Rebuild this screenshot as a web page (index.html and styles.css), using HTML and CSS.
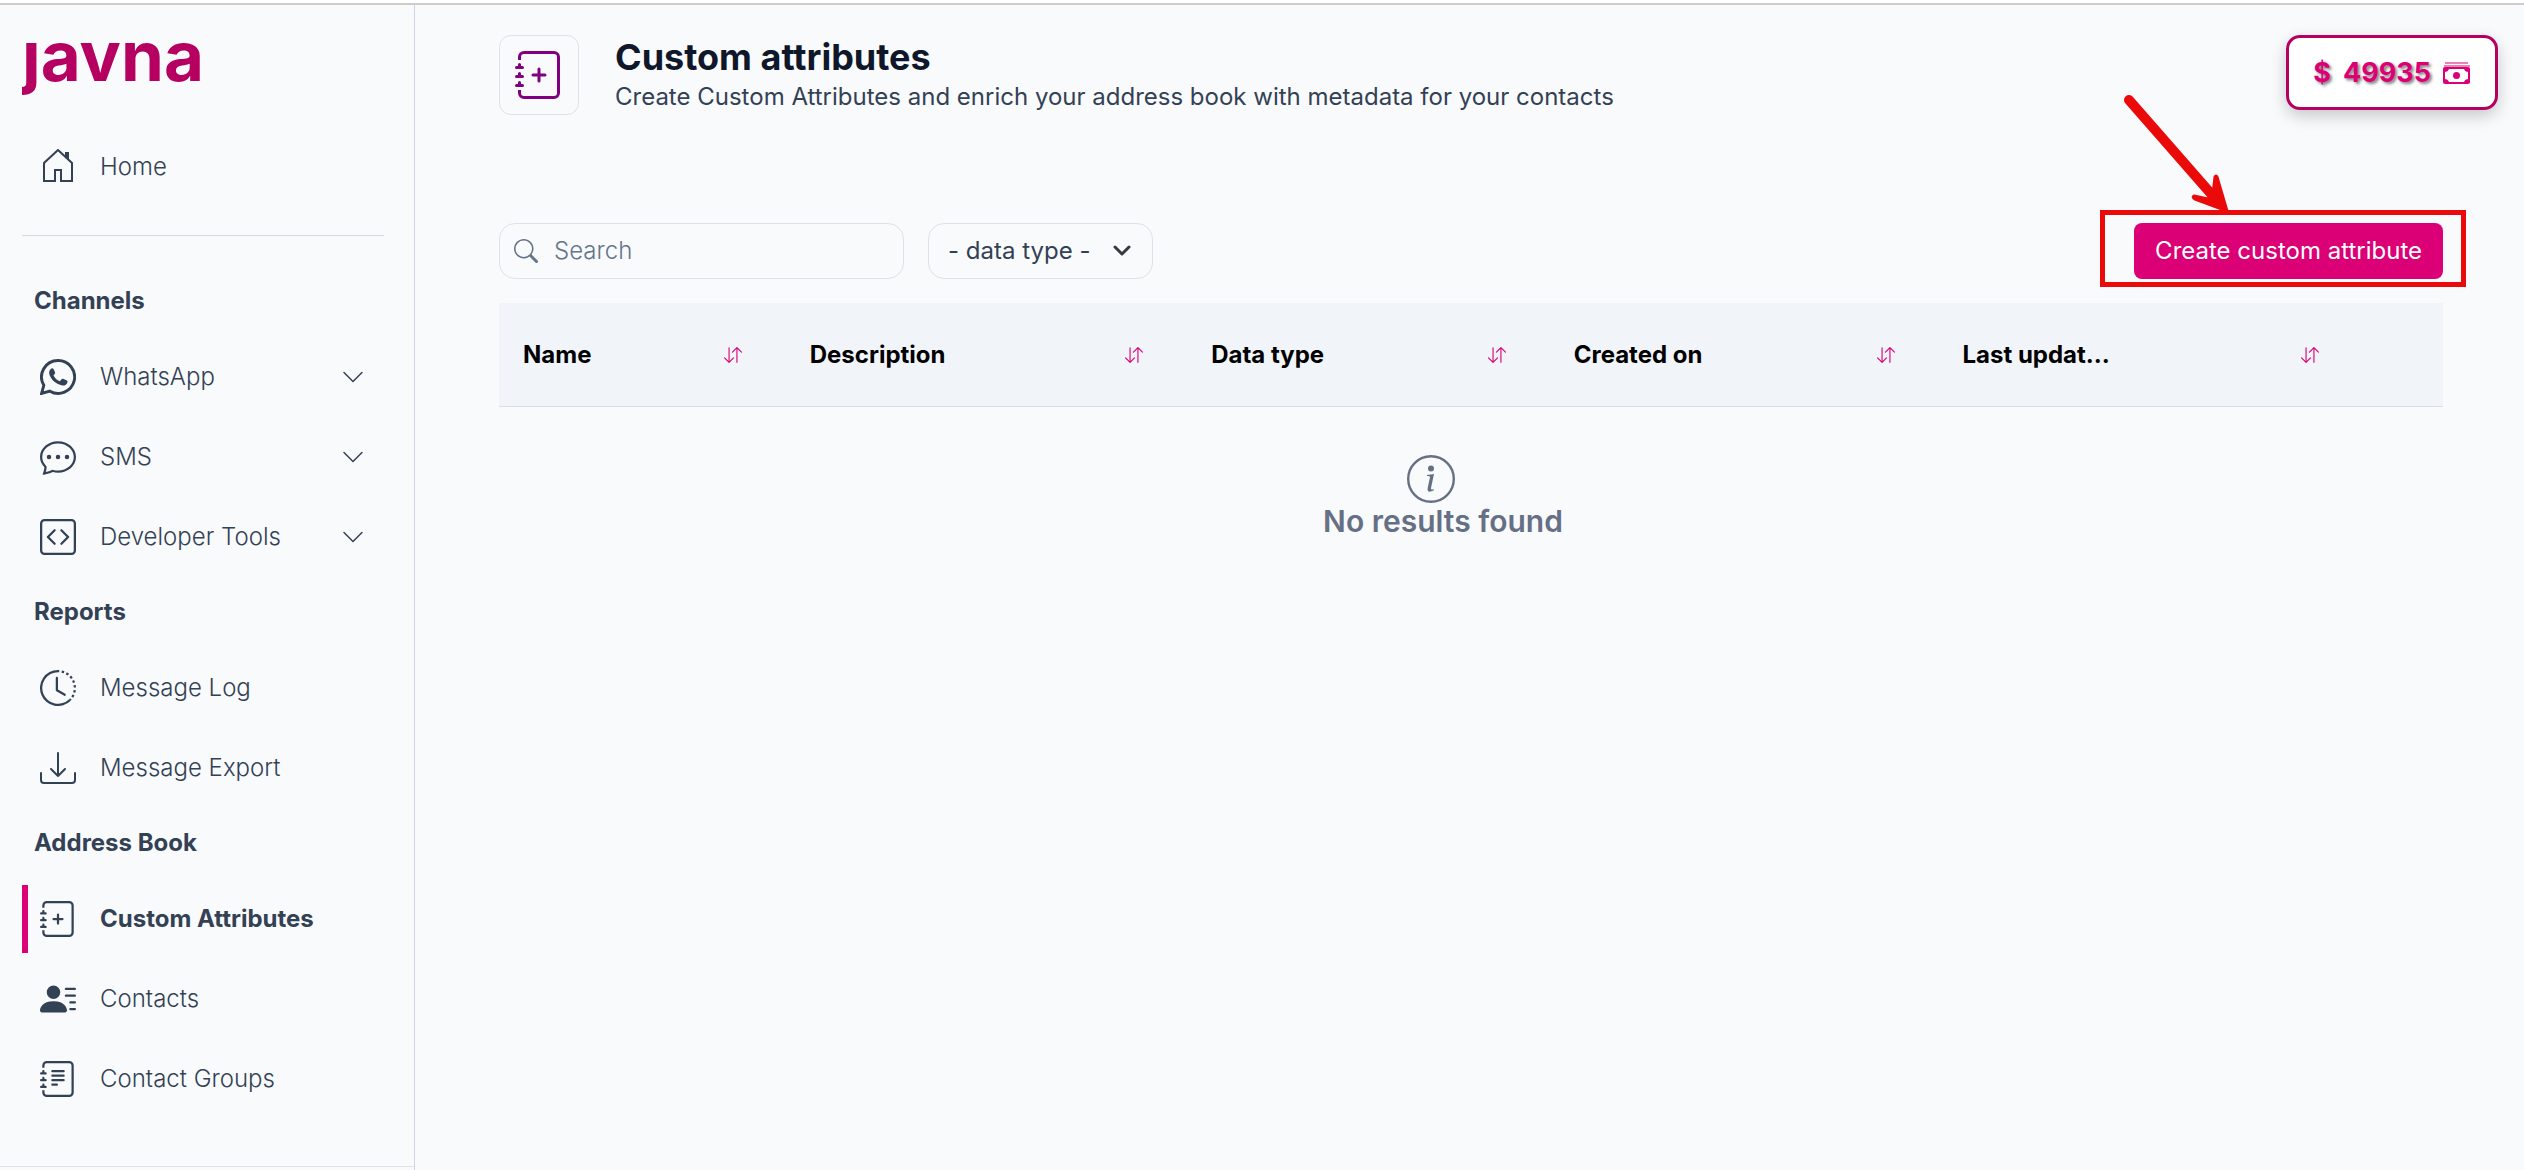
FILE: index.html
```html
<!DOCTYPE html>
<html lang="en">
<head>
<meta charset="utf-8">
<title>Custom attributes</title>
<link rel="stylesheet" href="styles.css">
</head>
<body>
<svg class="sprite" aria-hidden="true">
  <symbol id="journal" viewBox="0 0 16 16">
    <path d="M3 0h10a2 2 0 0 1 2 2v12a2 2 0 0 1-2 2H3a2 2 0 0 1-2-2v-1h1v1a1 1 0 0 0 1 1h10a1 1 0 0 0 1-1V2a1 1 0 0 0-1-1H3a1 1 0 0 0-1 1v1H1V2a2 2 0 0 1 2-2z"/>
    <path d="M1 5v-.5a.5.5 0 0 1 1 0V5h.5a.5.5 0 0 1 0 1h-2a.5.5 0 0 1 0-1H1zm0 3v-.5a.5.5 0 0 1 1 0V8h.5a.5.5 0 0 1 0 1h-2a.5.5 0 0 1 0-1H1zm0 3v-.5a.5.5 0 0 1 1 0v.5h.5a.5.5 0 0 1 0 1h-2a.5.5 0 0 1 0-1H1z"/>
  </symbol>
  <symbol id="journal-plus" viewBox="0 0 16 16">
    <use href="#journal"/>
    <path d="M8 5.5a.5.5 0 0 1 .5.5v1.5H10a.5.5 0 0 1 0 1H8.500V10a.5.5 0 0 1-1 0V8.500H6a.5.5 0 0 1 0-1h1.500V6a.5.5 0 0 1 .5-.5z"/>
  </symbol>
  <symbol id="chevron" viewBox="0 0 16 16">
    <path d="M1.646 4.646a.5.5 0 0 1 .708 0L8 10.293l5.646-5.647a.5.5 0 0 1 .708.708l-6 6a.5.5 0 0 1-.708 0l-6-6a.5.5 0 0 1 0-.708z"/>
  </symbol>
  <symbol id="sort" viewBox="0 0 16 16">
    <path d="M11.500 15a.5.5 0 0 0 .5-.5V2.707l3.146 3.147a.5.5 0 0 0 .708-.708l-4-4a.5.5 0 0 0-.708 0l-4 4a.5.5 0 1 0 .708.708L11 2.707V14.500a.5.5 0 0 0 .5.5zm-7-14a.5.5 0 0 1 .5.5v11.793l3.146-3.147a.5.5 0 0 1 .708.708l-4 4a.5.5 0 0 1-.708 0l-4-4a.5.5 0 0 1 .708-.708L4 13.293V1.500a.5.5 0 0 1 .5-.5z"/>
  </symbol>
</svg>

<div class="app">
  <aside class="sidebar">
    <div class="sidebar-body">
      <a class="logo" href="#">javna</a>
      <nav>
        <a class="item" href="#">
          <svg class="icon" viewBox="0 0 36 36"><path d="M4 32V14L18 1l14 13v18H21V21h-6v11z" fill="none" stroke="currentColor" stroke-width="2"/><path d="M25 3h4v9l-4-4z"/></svg>
          <span>Home</span>
        </a>
        <hr>
        <h2>Channels</h2>
        <button class="item" type="button">
          <svg class="icon" viewBox="0 0 16 16"><path d="M8 .7a7.300 7.300 0 0 0-6.300 11L.7 15.300l3.700-1A7.300 7.300 0 1 0 8 .7z" fill="none" stroke="currentColor" stroke-width="1.300"/><path d="M5.100 4.200c.3-.2.700-.1.900.2l.7 1.500c.1.300 0 .6-.2.800l-.5.600c.6 1.200 1.500 2 2.800 2.600l.8-.9c.2-.2.500-.3.700-.2l1.600.8c.3.100.4.400.3.700-.3 1.200-1.500 1.700-2.600 1.400C6.700 11 4.700 9 4.100 6.600c-.2-1 .2-1.900 1-2.400z"/></svg>
          <span>WhatsApp</span><svg class="chevron"><use href="#chevron"/></svg>
        </button>
        <button class="item" type="button">
          <svg class="icon" viewBox="0 0 16 16"><path d="M5 8a1 1 0 1 1-2 0 1 1 0 0 1 2 0zm4 0a1 1 0 1 1-2 0 1 1 0 0 1 2 0zm3 1a1 1 0 1 0 0-2 1 1 0 0 0 0 2z"/><path d="m2.165 15.803.02-.004c1.830-.363 2.948-.842 3.468-1.105A9.060 9.060 0 0 0 8 15c4.418 0 8-3.134 8-7s-3.582-7-8-7-8 3.134-8 7c0 1.760.743 3.370 1.970 4.600a10.437 10.437 0 0 1-.524 2.318l-.003.011a10.722 10.722 0 0 1-.244.637c-.079.186.074.394.273.362a21.673 21.673 0 0 0 .693-.125zm.8-3.108a1 1 0 0 0-.287-.801C1.618 10.830 1 9.468 1 8c0-3.192 3.004-6 7-6s7 2.808 7 6c0 3.193-3.004 6-7 6a8.060 8.060 0 0 1-2.088-.272 1 1 0 0 0-.711.074c-.387.196-1.240.570-2.634.893a10.970 10.970 0 0 0 .398-2z"/></svg>
          <span>SMS</span><svg class="chevron"><use href="#chevron"/></svg>
        </button>
        <button class="item" type="button">
          <svg class="icon" viewBox="0 0 16 16"><path d="M14 1a1 1 0 0 1 1 1v12a1 1 0 0 1-1 1H2a1 1 0 0 1-1-1V2a1 1 0 0 1 1-1h12zM2 0a2 2 0 0 0-2 2v12a2 2 0 0 0 2 2h12a2 2 0 0 0 2-2V2a2 2 0 0 0-2-2H2z"/><path d="M6.854 4.646a.5.5 0 0 1 0 .708L4.207 8l2.647 2.646a.5.5 0 0 1-.708.708l-3-3a.5.5 0 0 1 0-.708l3-3a.5.5 0 0 1 .708 0zm2.292 0a.5.5 0 0 0 0 .708L11.793 8l-2.647 2.646a.5.5 0 0 0 .708.708l3-3a.5.5 0 0 0 0-.708l-3-3a.5.5 0 0 0-.708 0z"/></svg>
          <span>Developer Tools</span><svg class="chevron"><use href="#chevron"/></svg>
        </button>
        <h2>Reports</h2>
        <a class="item" href="#">
          <svg class="icon" viewBox="0 0 16 16"><path d="M8.515 1.019A7 7 0 0 0 8 1V0a8 8 0 0 1 .589.022l-.074.997zm2.004.450a7.003 7.003 0 0 0-.985-.299l.219-.976c.383.086.760.200 1.126.342l-.360.933zm1.370.710a7.010 7.010 0 0 0-.439-.270l.493-.870a8.025 8.025 0 0 1 .979.654l-.615.789a6.996 6.996 0 0 0-.418-.302zm1.834 1.790a6.990 6.990 0 0 0-.653-.796l.724-.690c.270.285.520.590.747.910l-.818.576zm.744 1.352a7.080 7.080 0 0 0-.214-.468l.893-.450a7.976 7.976 0 0 1 .450 1.088l-.950.313a7.023 7.023 0 0 0-.179-.483zm.530 2.507a6.991 6.991 0 0 0-.100-1.025l.985-.170c.067.386.106.778.116 1.170l-1 .025zm-.131 1.538c.033-.170.060-.339.081-.510l.993.123a7.957 7.957 0 0 1-.230 1.155l-.964-.267c.046-.165.086-.332.120-.501zm-.952 2.379c.184-.290.346-.594.486-.908l.914.405c-.160.360-.345.706-.555 1.038l-.845-.535zm-.964 1.205c.122-.122.239-.248.350-.378l.758.653a8.073 8.073 0 0 1-.401.432l-.707-.707z"/><path d="M8 1a7 7 0 1 0 4.950 11.950l.707.707A8.001 8.001 0 1 1 8 0v1z"/><path d="M7.500 3a.5.5 0 0 1 .5.5v5.210l3.248 1.856a.5.5 0 0 1-.496.868l-3.500-2A.5.5 0 0 1 7 9V3.500a.5.5 0 0 1 .5-.5z"/></svg>
          <span>Message Log</span>
        </a>
        <a class="item" href="#">
          <svg class="icon" viewBox="0 0 36 36"><path d="M1 23v7q0 3 3 3h28q3 0 3-3v-7M18 3v23M11 19l7 7 7-7" fill="none" stroke="currentColor" stroke-width="2" stroke-linecap="round" stroke-linejoin="round"/></svg>
          <span>Message Export</span>
        </a>
        <h2>Address Book</h2>
        <a class="item active" href="#" aria-current="page">
          <svg class="icon"><use href="#journal-plus"/></svg>
          <span>Custom Attributes</span>
        </a>
        <a class="item" href="#">
          <svg class="icon" viewBox="0 0 16 16"><path d="M6 8a3 3 0 1 0 0-6 3 3 0 0 0 0 6zm-5 6s-1 0-1-1 1-4 6-4 6 3 6 4-1 1-1 1H1zM11 3.500a.5.5 0 0 1 .5-.5h4a.5.5 0 0 1 0 1h-4a.5.5 0 0 1-.5-.5zm.5 2.500a.5.5 0 0 0 0 1h4a.5.5 0 0 0 0-1h-4zm2 3a.5.5 0 0 0 0 1h2a.5.5 0 0 0 0-1h-2zm0 3a.5.5 0 0 0 0 1h2a.5.5 0 0 0 0-1h-2z"/></svg>
          <span>Contacts</span>
        </a>
        <a class="item" href="#">
          <svg class="icon" viewBox="0 0 16 16"><use href="#journal"/><path d="M5 10.500a.5.5 0 0 1 .5-.5h2a.5.5 0 0 1 0 1h-2a.5.5 0 0 1-.5-.5zm0-2a.5.5 0 0 1 .5-.5h5a.5.5 0 0 1 0 1h-5a.5.5 0 0 1-.5-.5zm0-2a.5.5 0 0 1 .5-.5h5a.5.5 0 0 1 0 1h-5a.5.5 0 0 1-.5-.5zm0-2a.5.5 0 0 1 .5-.5h5a.5.5 0 0 1 0 1h-5a.5.5 0 0 1-.5-.5z"/></svg>
          <span>Contact Groups</span>
        </a>
      </nav>
    </div>
    <div class="sidebar-foot"></div>
  </aside>

  <main>
    <header class="page-head">
      <div class="page-icon"><svg><use href="#journal-plus"/></svg></div>
      <div class="page-title">
        <h1>Custom attributes</h1>
        <p>Create Custom Attributes and enrich your address book with metadata for your contacts</p>
      </div>
      <button class="balance" type="button">
        <span>$</span><span>49935</span>
        <svg viewBox="0 0 28 22"><path d="M2 1h23M1 4h26" fill="none" stroke="currentColor" stroke-width="1"/><rect x="1" y="6" width="25" height="15" rx="1" fill="none" stroke="currentColor" stroke-width="2"/><circle cx="13.500" cy="13.500" r="3.500"/><path d="M1 6h5q0 4-5 4zM26 6h-5q0 4 5 4zM1 21h5q0-4-5-4zM26 21h-5q0-4 5-4z"/></svg>
      </button>
    </header>

    <div class="toolbar">
      <label class="search">
        <svg viewBox="0 0 16 16"><path d="M11.742 10.344a6.500 6.500 0 1 0-1.397 1.398h-.001c.030.040.062.078.098.115l3.850 3.850a1 1 0 0 0 1.415-1.414l-3.850-3.850a1.007 1.007 0 0 0-.115-.100zM12 6.500a5.500 5.500 0 1 1-11 0 5.500 5.500 0 0 1 11 0z"/></svg>
        <input type="search" placeholder="Search" aria-label="Search">
      </label>
      <div class="select">
        <select aria-label="Data type"><option>- data type -</option></select>
        <svg viewBox="0 0 18 12"><path d="M2 2l7 7 7-7" fill="none" stroke="currentColor" stroke-width="3" stroke-linecap="round" stroke-linejoin="round"/></svg>
      </div>
      <div class="create">
        <button type="button">Create custom attribute</button>
        <div class="callout"></div>
        <svg class="arrow" viewBox="0 0 110 120"><path d="M10 10L94 106" fill="none" stroke="currentColor" stroke-width="10" stroke-linecap="round"/><path d="M108 121L98 87Q97 85 96 87L94 104 89 109 75 106Q73 107 76 109z" fill="currentColor" stroke="currentColor" stroke-width="3" stroke-linejoin="round"/></svg>
      </div>
    </div>

    <table>
      <colgroup><col class="c-name"><col class="c-desc"><col class="c-type"><col class="c-created"><col class="c-updated"><col></colgroup>
      <thead>
        <tr>
          <th><div><span>Name</span><svg><use href="#sort"/></svg></div></th>
          <th><div><span>Description</span><svg><use href="#sort"/></svg></div></th>
          <th><div><span>Data type</span><svg><use href="#sort"/></svg></div></th>
          <th><div><span>Created on</span><svg><use href="#sort"/></svg></div></th>
          <th><div><span>Last updat...</span><svg><use href="#sort"/></svg></div></th>
          <th></th>
        </tr>
      </thead>
      <tbody>
        <tr><td colspan="6">
          <div class="empty">
            <svg viewBox="0 0 48 48"><circle cx="24" cy="24" r="22.800" fill="none" stroke="currentColor" stroke-width="2.400"/><circle cx="24" cy="13.500" r="3"/><path d="M20 20l7-1-3 14q-.5 2.500 3 1l-.4 1.600q-6.600 3-6-2l2.400-11.600q.2-1.200-3-1z"/></svg>
            <strong>No results found</strong>
          </div>
        </td></tr>
      </tbody>
    </table>
  </main>
</div>
</body>
</html>
```
FILE: styles.css
```css
* { box-sizing: border-box; }

body {
  margin: 0;
  padding-top: 3px;
  min-height: 100vh;
  display: flex;
  flex-direction: column;
  background: #fff;
  color: #334155;
  font: 400 24px/36px Inter, "Liberation Sans", sans-serif;
}

button, input, select { font: inherit; color: inherit; }
h1, h2, p { margin: 0; }
svg { fill: currentColor; flex: none; }
.sprite { position: absolute; width: 0; height: 0; }

.app {
  flex: 1;
  display: flex;
  border-top: 2px solid #ccc;
  background: #f9fafc;
}

/* Sidebar */
.sidebar {
  flex: none;
  width: 415px;
  display: flex;
  flex-direction: column;
  border-right: 1px solid #cbd5e1;
}
.sidebar-body { flex: 1; padding: 10px 30px 0 22px; }
.sidebar-foot { height: 4px; border-top: 1px solid #dee2e6; }

/* The wordmark has no dot on the j: only the part from the x-height down shows */
.logo {
  display: block;
  clip-path: inset(28px 0 0 0);
  color: #b50062;
  font-size: 69px;
  font-weight: 700;
  line-height: 83px;
  text-decoration: none;
}

nav { padding-top: 35px; }
nav hr {
  margin: 34px 0 24px;
  border: 0;
  border-top: 1px solid #d5d9de;
}
nav h2 {
  padding: 23px 12px 24px;
  font-size: 24px;
  font-weight: 700;
  line-height: 36px;
}
.item {
  display: flex;
  align-items: center;
  gap: 24px;
  width: 100%;
  height: 68px;
  padding: 0 19px 0 12px;
  border: 0;
  border-left: 6px solid transparent;
  background: none;
  color: inherit;
  font-weight: 300;
  text-align: left;
  text-decoration: none;
}
.item + .item { margin-top: 12px; }
.item.active { border-left-color: #db0075; font-weight: 700; }
.item span { flex: 1; }
.icon { width: 36px; height: 36px; }
.chevron { width: 24px; height: 24px; }

/* Main column */
main { flex: 1; min-width: 0; padding: 30px 81px 0 84px; }

.page-head {
  display: flex;
  align-items: flex-start;
  gap: 36px;
  margin-right: -55px;
}
.page-icon {
  display: grid;
  place-items: center;
  width: 80px;
  height: 80px;
  border: 1px solid #dee2e6;
  border-radius: 12px;
  color: #800080;
}
.page-icon svg { width: 48px; height: 48px; }
.page-title { flex: 1; }
.page-title h1 {
  color: #0f172a;
  font-size: 36px;
  font-weight: 700;
  line-height: 44px;
}

.balance {
  display: flex;
  align-items: center;
  gap: 12px;
  height: 75px;
  padding: 0 24px;
  border: 3px solid #b50062;
  border-radius: 14px;
  background: #fff;
  box-shadow: 0 6px 16px rgba(0, 0, 0, .2);
  color: #db0075;
  font-size: 27px;
  font-weight: 700;
  text-shadow: 2px 2px 3px rgba(0, 0, 0, .5);
}
.balance svg { width: 28px; height: 22px; }

.toolbar { display: flex; gap: 24px; margin: 108px 0 24px; }
.search {
  display: flex;
  align-items: center;
  gap: 16px;
  width: 405px;
  height: 56px;
  padding: 0 14px;
  border: 1px solid #dee2e6;
  border-radius: 16px;
  color: #64748b;
}
.search svg { width: 24px; height: 24px; }
.search input {
  flex: 1;
  min-width: 0;
  padding: 0;
  border: 0;
  outline: 0;
  background: none;
  font-weight: 300;
}
.search input::placeholder { color: inherit; opacity: 1; }

.select { display: grid; align-items: center; width: 225px; }
.select select, .select svg { grid-area: 1 / 1; }
.select select {
  appearance: none;
  width: 100%;
  height: 56px;
  padding: 0 48px 0 19px;
  border: 1px solid #dee2e6;
  border-radius: 16px;
  background: none;
}
.select svg {
  justify-self: end;
  width: 18px;
  height: 12px;
  margin-right: 22px;
  color: #343a40;
  pointer-events: none;
}

.create { position: relative; margin-left: auto; }
.create button {
  height: 56px;
  padding: 0 21px;
  border: 0;
  border-radius: 8px;
  background: #db0075;
  color: #fff;
}
.callout {
  position: absolute;
  inset: -13px -23px -8px -34px;
  border: 5px solid #eb0a0a;
  pointer-events: none;
}
.arrow {
  position: absolute;
  left: -15px;
  top: -133px;
  width: 110px;
  height: 120px;
  color: #eb0a0a;
  overflow: hidden;
}

table { width: 100%; table-layout: fixed; border-collapse: collapse; }
.c-name { width: 14.75%; }
.c-desc { width: 20.65%; }
.c-type { width: 18.65%; }
.c-created { width: 20%; }
.c-updated { width: 21.85%; }
thead tr { background: #f1f4f9; border-bottom: 1px solid #dadfe5; }
th {
  height: 103px;
  padding: 2px 44px 0 24px;
  color: #000;
  font-weight: 700;
  text-align: left;
}
th:last-child { padding: 0; }
th div { display: flex; align-items: center; justify-content: space-between; }
th svg { width: 18px; height: 18px; color: #db0075; }
td { padding: 48px 56px 0 0; }
.empty {
  display: flex;
  flex-direction: column;
  align-items: center;
  color: #667085;
}
.empty svg { width: 48px; height: 48px; margin-right: 24px; }
.empty strong { font-size: 30px; font-weight: 600; }
```
